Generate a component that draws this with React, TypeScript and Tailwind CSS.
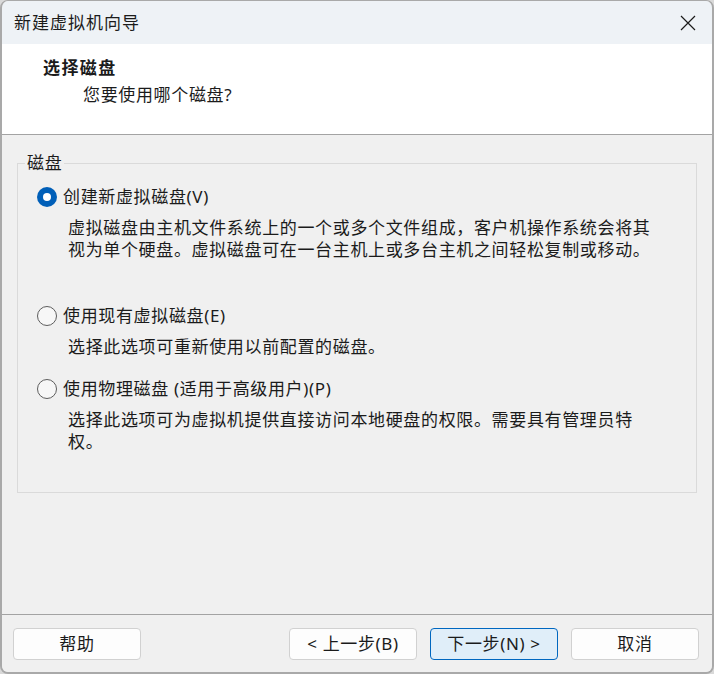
import React from "react";

const font = { fontFamily: '"Noto Sans", "Noto Sans CJK SC", sans-serif' };

function Radio({ checked }: { checked?: boolean }) {
  if (checked) {
    return (
      <span className="flex h-[20px] w-[20px] shrink-0 items-center justify-center rounded-full bg-[#005fb8]">
        <span className="h-[8px] w-[8px] rounded-full bg-white" />
      </span>
    );
  }
  return <span className="h-[20px] w-[20px] shrink-0 rounded-full border border-[#5d5d5d] bg-[#f7f7f7]" />;
}

function Option({
  checked,
  label,
  lines,
  className,
}: {
  checked?: boolean;
  label: string;
  lines: string[];
  className?: string;
}) {
  return (
    <div className={className}>
      <div className="flex h-[22px] items-center pl-[19px]">
        <Radio checked={checked} />
        <span className="ml-[6px] leading-[22px]">{label}</span>
      </div>
      <div className="mt-[9px] pl-[50px]">
        {lines.map((l, i) => (
          <div key={i} className="h-[22px] overflow-visible whitespace-nowrap leading-[22px]">
            {l}
          </div>
        ))}
      </div>
    </div>
  );
}

function Btn({ children, primary }: { children: React.ReactNode; primary?: boolean }) {
  return (
    <button
      className={
        "flex h-[32px] w-[128px] items-center justify-center rounded-[4px] border leading-[20px] text-[#1b1b1b] " +
        (primary ? "border-[#0067c0] bg-[#e0eef9]" : "border-[#d1d1d1] bg-[#fdfdfd]")
      }
    >
      {children}
    </button>
  );
}

export default function App() {
  return (
    <div
      className="h-[674px] w-[714px] bg-[#d9d9d9] text-[17px] tracking-[0.65px] text-[#1b1b1b]"
      style={font}
    >
      <div className="flex h-full w-full flex-col overflow-hidden rounded-[8px] border-x-2 border-b-2 border-t border-[#a9a9a9]">
        {/* Title bar */}
        <div className="flex h-[43px] shrink-0 items-center justify-between bg-[#eef2f6] pl-[12px] pr-[16px]">
          <span className="leading-[22px] tracking-[1px]">新建虚拟机向导</span>
          <svg width="16" height="16" viewBox="0 0 16 16" className="text-[#1b1b1b]">
            <path d="M1 1 L15 15 M15 1 L1 15" stroke="currentColor" strokeWidth="1.2" fill="none" />
          </svg>
        </div>
        {/* Header */}
        <div className="h-[91px] shrink-0 border-b border-[#a3a3a3] bg-white pl-[41px] pt-[13px]">
          <div className="font-bold leading-[22px] tracking-[1.4px]">选择磁盘</div>
          <div className="ml-[40px] mt-[5px] leading-[22px]">您要使用哪个磁盘?</div>
        </div>
        {/* Body */}
        <div className="flex flex-1 flex-col bg-[#f0f0f0]">
          <div className="px-[15px] pt-[17px]">
            <fieldset className="h-[341px] border border-[#dadada]">
              <legend className="ml-[7px] px-[2px] leading-[22px]">磁盘</legend>
              <Option
                className="mt-[12px]"
                checked
                label="创建新虚拟磁盘(V)"
                lines={[
                  "虚拟磁盘由主机文件系统上的一个或多个文件组成，客户机操作系统会将其",
                  "视为单个硬盘。虚拟磁盘可在一台主机上或多台主机之间轻松复制或移动。",
                ]}
              />
              <Option
                className="mt-[44px]"
                label="使用现有虚拟磁盘(E)"
                lines={["选择此选项可重新使用以前配置的磁盘。"]}
              />
              <Option
                className="mt-[20px]"
                label="使用物理磁盘 (适用于高级用户)(P)"
                lines={[
                  "选择此选项可为虚拟机提供直接访问本地硬盘的权限。需要具有管理员特",
                  "权。",
                ]}
              />
            </fieldset>
          </div>
          <div className="flex-1" />
          <div className="flex items-center border-t border-[#a3a3a3] pb-[12px] pl-[11px] pr-[13px] pt-[13px]">
            <Btn>帮助</Btn>
            <div className="flex-1" />
            <div className="flex gap-[13px]">
              <Btn>&lt; 上一步(B)</Btn>
              <Btn primary>下一步(N) &gt;</Btn>
              <Btn>取消</Btn>
            </div>
          </div>
        </div>
      </div>
    </div>
  );
}
